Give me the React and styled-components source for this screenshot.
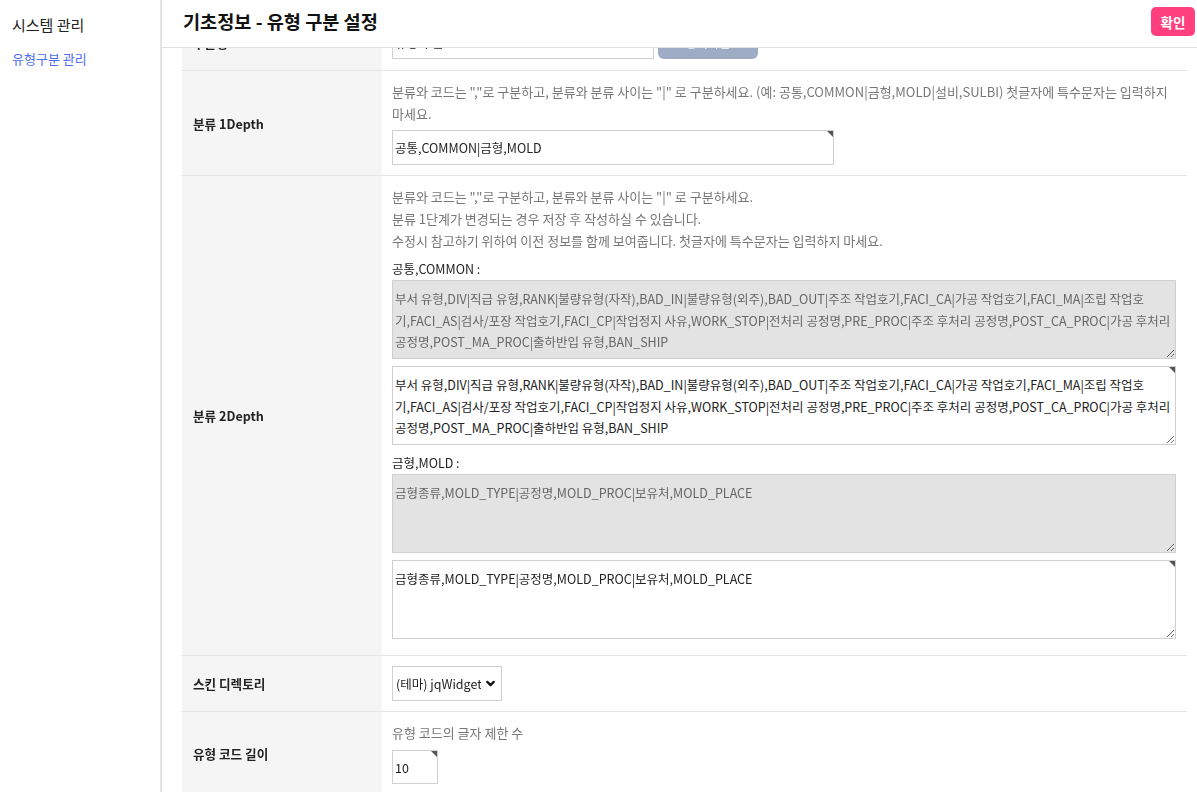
import React, { useLayoutEffect, useRef } from 'react';
import styled, { createGlobalStyle } from 'styled-components';
import { ChevronDown } from 'lucide-react';

const GlobalStyle = createGlobalStyle`
  html, body {
    margin: 0;
    padding: 0;
    height: 100%;
    overflow: hidden;
    font-family: "Noto Sans CJK KR", "Noto Sans", sans-serif;
    color: #222;
  }
  * { box-sizing: border-box; }
`;

const Layout = styled.div`
  display: flex;
  height: 100vh;
`;

const Sidebar = styled.aside`
  width: 162px;
  flex-shrink: 0;
  border-right: 2px solid #e4e4e4;
  padding: 15px 12px;
`;

const SideTitle = styled.div`
  font-size: 15px;
  line-height: 20px;
  color: #222;
`;

const SideLink = styled.a`
  display: block;
  margin-top: 14px;
  font-size: 13px;
  line-height: 20px;
  color: #4f6df5;
  text-decoration: none;
`;

const Main = styled.main`
  flex: 1;
  display: flex;
  flex-direction: column;
  min-width: 0;
`;

const Header = styled.header`
  height: 48px;
  flex-shrink: 0;
  display: flex;
  justify-content: space-between;
  align-items: flex-start;
  padding: 6px 2px 0 21px;
  border-bottom: 1px solid #dedede;
`;

const PageTitle = styled.h1`
  margin: 0;
  font-size: 18.6px;
  line-height: 29px;
  font-weight: 700;
  color: #111;
`;

const ConfirmButton = styled.button`
  width: 44px;
  height: 29px;
  border: none;
  border-radius: 5px;
  background: #ff3f7e;
  color: #fff;
  font-family: inherit;
  font-size: 13.5px;
  font-weight: 700;
  margin-top: 1px;
  cursor: pointer;
`;

const Scroller = styled.div`
  flex: 1;
  overflow: auto;
  padding: 0 10px 240px 20px;
  scrollbar-width: none;
  &::-webkit-scrollbar { display: none; }
`;

const Table = styled.table`
  width: 100%;
  border-collapse: collapse;
  margin-top: 16px;
`;

const Row = styled.tr`
  border-bottom: 1px solid #e4e4e4;
`;

const Label = styled.th`
  width: 200px;
  background: #f5f5f5;
  text-align: left;
  padding: 0 11px;
  font-size: 12.6px;
  font-weight: 700;
  color: #222;
`;

const Cell = styled.td`
  padding: ${(p) => p.pad || '10px 11px 10px 10px'};
  font-size: 12px;
`;

const Help = styled.p`
  margin: 0;
  font-size: 13px;
  line-height: 22px;
  color: #777;
  word-break: keep-all;
`;

const SubLabel = styled.div`
  margin-top: ${(p) => p.gap || 6}px;
  font-size: 12.5px;
  line-height: 22px;
  color: #222;
`;

const Inline = styled.div`
  display: flex;
  gap: 4px;
  align-items: center;
`;

const Editable = styled.div`
  position: relative;
  width: ${(p) => p.width || '100%'};
  margin-top: ${(p) => p.top || 0}px;
  &::after {
    content: "";
    position: absolute;
    top: 1px;
    right: 1px;
    border-style: solid;
    border-width: 0 6px 6px 0;
    border-color: transparent #555 transparent transparent;
  }
`;

const TextInput = styled.input`
  display: block;
  width: ${(p) => p.width || '100%'};
  height: ${(p) => p.height || 34}px;
  border: 1px solid #d0d0d0;
  padding: 0 2px;
  font-family: inherit;
  font-size: 12.5px;
  color: #222;
  outline: none;
`;

const TextArea = styled.textarea`
  display: block;
  width: 100%;
  height: 79px;
  margin: 0;
  padding: 7px 2px;
  border: 1px solid #cfcfcf;
  background: ${(p) => (p.readOnly ? '#e3e3e3' : '#fff')};
  color: ${(p) => (p.readOnly ? '#666' : '#222')};
  font-family: inherit;
  font-size: 12.5px;
  line-height: 21.5px;
  outline: none;
`;

const Spacer = styled.div`
  height: ${(p) => p.size || 0}px;
`;

const GreyButton = styled.button`
  width: 100px;
  height: 33px;
  border: none;
  border-radius: 6px;
  background: #9eabc5;
  color: #fff;
  font-family: inherit;
  font-size: 12px;
`;

const SelectWrap = styled.div`
  position: relative;
  display: inline-block;
`;

const Select = styled.select`
  appearance: none;
  width: 110px;
  height: 35px;
  border: 1px solid #cfcfcf;
  background: #fff;
  padding: 0 20px 0 3px;
  font-family: inherit;
  font-size: 12.5px;
  color: #222;
  outline: none;
`;

const Chevron = styled.span`
  position: absolute;
  right: 5px;
  top: 11px;
  pointer-events: none;
  display: flex;
`;

const common =
  '부서 유형,DIV|직급 유형,RANK|불량유형(자작),BAD_IN|불량유형(외주),BAD_OUT|주조 작업호기,FACI_CA|가공 작업호기,FACI_MA|조립 작업호기,FACI_AS|검사/포장 작업호기,FACI_CP|작업정지 사유,WORK_STOP|전처리 공정명,PRE_PROC|주조 후처리 공정명,POST_CA_PROC|가공 후처리 공정명,POST_MA_PROC|출하반입 유형,BAN_SHIP';
const mold = '금형종류,MOLD_TYPE|공정명,MOLD_PROC|보유처,MOLD_PLACE';

export default function App() {
  const scrollRef = useRef(null);

  // the page is shown scrolled a little, first row half under the header
  useLayoutEffect(() => {
    if (scrollRef.current) scrollRef.current.scrollTop = 49;
  }, []);

  return (
    <>
      <GlobalStyle />
      <Layout>
        <Sidebar>
          <SideTitle>시스템 관리</SideTitle>
          <SideLink href="#">유형구분 관리</SideLink>
        </Sidebar>
        <Main>
          <Header>
            <PageTitle>기초정보 - 유형 구분 설정</PageTitle>
            <ConfirmButton>확인</ConfirmButton>
          </Header>
          <Scroller ref={scrollRef}>
            <Table>
              <tbody>
                <Row>
                  <Label>구분명</Label>
                  <Cell pad="11px 11px 11px 10px">
                    <Inline>
                      <TextInput width="262px" height={33} defaultValue="유형 구분" />
                      <GreyButton>중복확인</GreyButton>
                    </Inline>
                  </Cell>
                </Row>
                <Row>
                  <Label>분류 1Depth</Label>
                  <Cell>
                    <Help>
                      분류와 코드는 ","로 구분하고, 분류와 분류 사이는 "|" 로 구분하세요. (예: 공통,COMMON|금형,MOLD|설비,SULBI) 첫글자에 특수문자는 입력하지 마세요.
                    </Help>
                    <Editable width="442px" top={5}>
                      <TextInput height={35} defaultValue="공통,COMMON|금형,MOLD" />
                    </Editable>
                  </Cell>
                </Row>
                <Row>
                  <Label>분류 2Depth</Label>
                  <Cell>
                    <Help>분류와 코드는 ","로 구분하고, 분류와 분류 사이는 "|" 로 구분하세요.</Help>
                    <Help>분류 1단계가 변경되는 경우 저장 후 작성하실 수 있습니다.</Help>
                    <Help>수정시 참고하기 위하여 이전 정보를 함께 보여줍니다. 첫글자에 특수문자는 입력하지 마세요.</Help>
                    <SubLabel>공통,COMMON :</SubLabel>
                    <TextArea readOnly defaultValue={common} />
                    <Editable top={7}>
                      <TextArea defaultValue={common} />
                    </Editable>
                    <SubLabel gap={7}>금형,MOLD :</SubLabel>
                    <TextArea readOnly defaultValue={mold} />
                    <Editable top={7}>
                      <TextArea defaultValue={mold} />
                    </Editable>
                    <Spacer size={6} />
                  </Cell>
                </Row>
                <Row>
                  <Label>스킨 디렉토리</Label>
                  <Cell>
                    <SelectWrap>
                      <Select defaultValue="jq">
                        <option value="jq">(테마) jqWidget</option>
                      </Select>
                      <Chevron>
                        <ChevronDown size={13} strokeWidth={4} color="#111" />
                      </Chevron>
                    </SelectWrap>
                  </Cell>
                </Row>
                <Row>
                  <Label>유형 코드 길이</Label>
                  <Cell>
                    <Help>유형 코드의 글자 제한 수</Help>
                    <Editable width="46px" top={6}>
                      <TextInput height={34} defaultValue="10" />
                    </Editable>
                  </Cell>
                </Row>
              </tbody>
            </Table>
          </Scroller>
        </Main>
      </Layout>
    </>
  );
}
